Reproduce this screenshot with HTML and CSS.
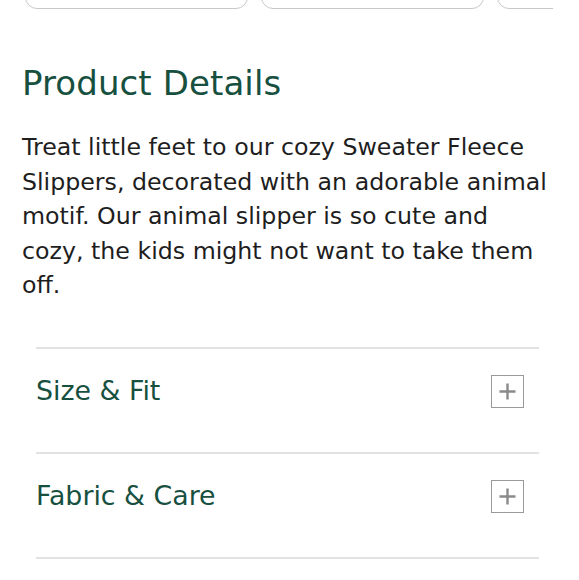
FILE: index.html
```html
<!DOCTYPE html>
<html>
<head>
<meta charset="utf-8">
<link rel="stylesheet" href="styles.css">
</head>
<body>
<div class="page">
  <div class="chips">
    <div class="chip"></div>
    <div class="chip"></div>
    <div class="chip"></div>
  </div>
  <section class="details">
    <h2 class="title">Product Details</h2>
    <p class="desc">Treat little feet to our cozy Sweater Fleece Slippers, decorated with an adorable animal motif. Our animal slipper is so cute and cozy, the kids might not want to take them off.</p>
  </section>
  <div class="accordion">
    <div class="acc-row">
      <span class="acc-title">Size &amp; Fit</span>
      <span class="acc-toggle"><svg width="19" height="19" viewBox="0 0 19 19"><path d="M9.5 1.5v16M1.5 9.5h16" stroke="#8a8a8a" stroke-width="2.4" fill="none"/></svg></span>
    </div>
    <div class="acc-row">
      <span class="acc-title">Fabric &amp; Care</span>
      <span class="acc-toggle"><svg width="19" height="19" viewBox="0 0 19 19"><path d="M9.5 1.5v16M1.5 9.5h16" stroke="#8a8a8a" stroke-width="2.4" fill="none"/></svg></span>
    </div>
  </div>
</div>
</body>
</html>
```
FILE: styles.css
```css
html, body {
  margin: 0;
  padding: 0;
  background: #fff;
}
body {
  font-family: "DejaVu Sans", sans-serif;
  overflow: hidden;
}
.page {
  width: 579px;
}
.chips {
  display: flex;
  gap: 13px;
  margin: -29px 26px 0 25px;
  overflow: hidden;
}
.chip {
  flex: 0 0 223px;
  height: 38px;
  border: 1px solid #c8c8c8;
  border-radius: 12px;
  box-sizing: border-box;
}
.details {
  padding: 0 22px;
}
.title {
  margin: 52px 0 0;
  font-size: 34px;
  font-weight: 400;
  color: #17503f;
  line-height: 44px;
  letter-spacing: 0.1px;
}
.desc {
  margin: 25px 0 0;
  font-size: 23.7px;
  line-height: 34.6px;
  color: #1e1e1e;
  width: 530px;
}
.accordion {
  margin: 44px 40px 0 36px;
  border-top: 2px solid #e2e2e2;
}
.acc-row {
  display: flex;
  align-items: center;
  justify-content: space-between;
  height: 103px;
  border-bottom: 2px solid #e2e2e2;
  padding-right: 15px;
}
.acc-title {
  font-size: 26.8px;
  color: #17503f;
  margin-top: -20px;
}
.acc-toggle {
  width: 33px;
  height: 33px;
  box-sizing: border-box;
  border: 1.5px solid #9a9a9a;
  display: flex;
  align-items: center;
  justify-content: center;
  margin-top: -18px;
}
```
